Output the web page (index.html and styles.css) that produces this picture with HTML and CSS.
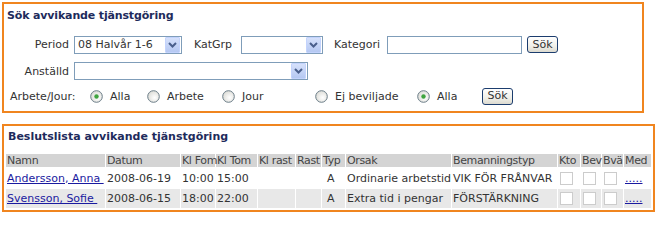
FILE: index.html
```html
<!DOCTYPE html>
<html lang="sv">
<head>
<meta charset="utf-8">
<title>Sök avvikande tjänstgöring</title>
<link rel="stylesheet" href="styles.css">
</head>
<body>
<div class="panel search">
  <div class="title">Sök avvikande tjänstgöring</div>
  <div class="row r1">
    <span class="lbl lbl-right w-period">Period</span>
    <div class="select w-sel1"><span class="sel-text">08 Halvår 1-6</span><span class="arrow"><svg width="15" height="16" viewBox="0 0 15 16"><polyline points="4,6 7.5,9.5 11,6" fill="none" stroke="#4a5f8c" stroke-width="2"/></svg></span></div>
    <span class="lbl w-katgrp">KatGrp</span>
    <div class="select w-sel2"><span class="sel-text"></span><span class="arrow"><svg width="15" height="16" viewBox="0 0 15 16"><polyline points="4,6 7.5,9.5 11,6" fill="none" stroke="#4a5f8c" stroke-width="2"/></svg></span></div>
    <span class="lbl w-kategori">Kategori</span>
    <input class="text-input" type="text">
    <button class="btn btn1">Sök</button>
  </div>
  <div class="row r2">
    <span class="lbl lbl-right w-period">Anställd</span>
    <div class="select w-sel3"><span class="sel-text"></span><span class="arrow"><svg width="15" height="16" viewBox="0 0 15 16"><polyline points="4,6 7.5,9.5 11,6" fill="none" stroke="#4a5f8c" stroke-width="2"/></svg></span></div>
  </div>
  <div class="row r3">
    <span class="lbl w-aj">Arbete/Jour:</span>
    <span class="opt o1"><svg class="radio" width="13" height="13" viewBox="0 0 13 13"><defs><radialGradient id="rg" cx="0.6" cy="0.6" r="0.7"><stop offset="0" stop-color="#ffffff"/><stop offset="1" stop-color="#d8d8d2"/></radialGradient></defs><circle cx="6.5" cy="6.5" r="5.8" fill="url(#rg)" stroke="#6b7d88" stroke-width="1"/><circle cx="6.5" cy="6.5" r="2.2" fill="#3fa43f"/></svg>Alla</span>
    <span class="opt o2"><svg class="radio" width="13" height="13" viewBox="0 0 13 13"><circle cx="6.5" cy="6.5" r="5.8" fill="url(#rg)" stroke="#6b7d88" stroke-width="1"/></svg>Arbete</span>
    <span class="opt o3"><svg class="radio" width="13" height="13" viewBox="0 0 13 13"><circle cx="6.5" cy="6.5" r="5.8" fill="url(#rg)" stroke="#6b7d88" stroke-width="1"/></svg>Jour</span>
    <span class="opt o4"><svg class="radio" width="13" height="13" viewBox="0 0 13 13"><circle cx="6.5" cy="6.5" r="5.8" fill="url(#rg)" stroke="#6b7d88" stroke-width="1"/></svg>Ej beviljade</span>
    <span class="opt o5"><svg class="radio" width="13" height="13" viewBox="0 0 13 13"><circle cx="6.5" cy="6.5" r="5.8" fill="url(#rg)" stroke="#6b7d88" stroke-width="1"/><circle cx="6.5" cy="6.5" r="2.2" fill="#3fa43f"/></svg>Alla</span>
    <button class="btn btn2">Sök</button>
  </div>
</div>

<div class="panel list">
  <div class="title">Beslutslista avvikande tjänstgöring</div>
  <table class="grid">
    <colgroup>
      <col class="c-namn"><col class="c-datum"><col class="c-fom"><col class="c-tom"><col class="c-rast1"><col class="c-rast2"><col class="c-typ"><col class="c-orsak"><col class="c-bem"><col class="c-kto"><col class="c-bev"><col class="c-bva"><col class="c-med">
    </colgroup>
    <thead>
      <tr><th>Namn</th><th>Datum</th><th>Kl Fom</th><th>Kl Tom</th><th>Kl rast</th><th>Rast</th><th>Typ</th><th>Orsak</th><th>Bemanningstyp</th><th>Kto</th><th>Bev</th><th>Bvä</th><th>Med</th></tr>
    </thead>
    <tbody>
      <tr class="odd">
        <td><a href="#">Andersson, Anna&nbsp;</a></td><td>2008-06-19</td><td>10:00</td><td>15:00</td><td></td><td></td><td class="typ">A</td><td>Ordinarie arbetstid</td><td>VIK FÖR FRÅNVAR</td>
        <td><span class="cb"></span></td><td><span class="cb"></span></td><td><span class="cb"></span></td><td><a href="#">.....</a></td>
      </tr>
      <tr class="even">
        <td><a href="#">Svensson, Sofie&nbsp;</a></td><td>2008-06-15</td><td>18:00</td><td>22:00</td><td></td><td></td><td class="typ">A</td><td>Extra tid i pengar</td><td>FÖRSTÄRKNING</td>
        <td><span class="cb"></span></td><td><span class="cb"></span></td><td><span class="cb"></span></td><td><a href="#">.....</a></td>
      </tr>
    </tbody>
  </table>
</div>
</body>
</html>
```

FILE: styles.css
```css
html, body {
  margin: 0;
  padding: 0;
  background: #ffffff;
}
body {
  font-family: "DejaVu Sans", Verdana, sans-serif;
  font-size: 11px;
  color: #333333;
}
.panel {
  border: 2px solid #f0851f;
  margin-left: 2px;
  box-sizing: border-box;
}
.search {
  margin-top: 2px;
  width: 642px;
  height: 111px;
  padding-top: 5px;
}
.list {
  margin-top: 11px;
  width: 653px;
  height: 88px;
  padding-top: 4px;
}
.title {
  font-weight: bold;
  color: #1e2b5c;
  line-height: 13px;
  height: 13px;
  padding-left: 3px;
}
.search .title { letter-spacing: -0.15px; }
.list .title {
  padding-left: 4px;
  margin-bottom: 10px;
}
.row {
  display: flex;
  align-items: center;
  white-space: nowrap;
}
.r1 { margin-top: 13px; height: 19px; }
.r2 { margin-top: 8px; height: 18px; }
.r3 { margin-top: 7px; height: 18px; }
.lbl {
  display: inline-block;
  color: #333333;
  flex: none;
}
.lbl-right { text-align: right; }
.w-period { width: 65px; margin-right: 5px; }
.w-katgrp { width: 42px; margin-left: 12px; margin-right: 5px; }
.w-kategori { width: 48px; margin-left: 11px; margin-right: 5px; }
.w-aj { width: 80px; margin-left: 6px; }

.select {
  display: flex;
  align-items: center;
  box-sizing: border-box;
  height: 18px;
  border: 1px solid #7f9db9;
  background: #ffffff;
  flex: none;
}
.w-sel1 { width: 108px; }
.w-sel2 { width: 82px; }
.w-sel3 { width: 234px; }
.sel-text {
  flex: 1;
  padding-left: 3px;
  color: #333333;
  overflow: hidden;
}
.arrow {
  display: block;
  width: 15px;
  height: 16px;
  margin-right: 1px;
  box-sizing: border-box;
  border: 1px solid #c3d3fd;
  border-radius: 1px;
  background: linear-gradient(#d6e1fb, #b5c8f2);
}
.arrow svg { display: block; margin: -1px 0 0 -1px; }

.text-input {
  box-sizing: border-box;
  width: 135px;
  height: 18px;
  border: 1px solid #7f9db9;
  margin: 0 5px 0 0;
  padding: 0;
  background: #ffffff;
  flex: none;
}
.btn {
  box-sizing: border-box;
  font-family: "DejaVu Sans", Verdana, sans-serif;
  font-size: 11px;
  color: #333333;
  height: 17px;
  width: 31px;
  padding: 0;
  border: 1px solid #1c3d6e;
  border-radius: 3px;
  background: linear-gradient(#ffffff, #f0efe8 60%, #dcdad0);
  flex: none;
  line-height: 14px;
}
.opt {
  display: inline-flex;
  align-items: center;
  flex: none;
  color: #333333;
}
.radio { display: block; margin-right: 7px; flex: none; }
.o1 { width: 57px; }
.o2 { width: 75px; }
.o3 { width: 93px; }
.o4 { width: 102px; }
.o5 { width: 65px; }

.grid {
  table-layout: fixed;
  border-collapse: separate;
  border-spacing: 1px;
  margin-left: 1px;
  width: 647px;
}
.c-namn { width: 99px; }
.c-datum { width: 74px; }
.c-fom { width: 34px; }
.c-tom { width: 41px; }
.c-rast1 { width: 37px; }
.c-rast2 { width: 25px; }
.c-typ { width: 23px; }
.c-orsak { width: 105px; }
.c-bem { width: 105px; }
.c-kto { width: 22px; }
.c-bev { width: 20px; }
.c-bva { width: 21px; }
.c-med { width: 27px; }
.grid th, .grid td {
  padding: 0 0 0 1px;
  text-align: left;
  white-space: nowrap;
  overflow: visible;
  vertical-align: middle;
}
.grid th {
  font-weight: normal;
  background: #d4d4d4;
  color: #444444;
  height: 13px;
  line-height: 13px;
  letter-spacing: -0.35px;
}
.grid td { color: #333333; }
.grid tr.odd td { height: 20px; background: #ffffff; }
.grid tr.even td { height: 19px; background: #e8e8e8; }
.grid td.typ { padding-left: 5px; }
.grid a { color: #1a1aa0; text-decoration: underline; }
.cb {
  display: block;
  box-sizing: border-box;
  width: 13px;
  height: 13px;
  border: 1px solid #cccccc;
  background: #ffffff;
  margin-left: 1px;
}
```
